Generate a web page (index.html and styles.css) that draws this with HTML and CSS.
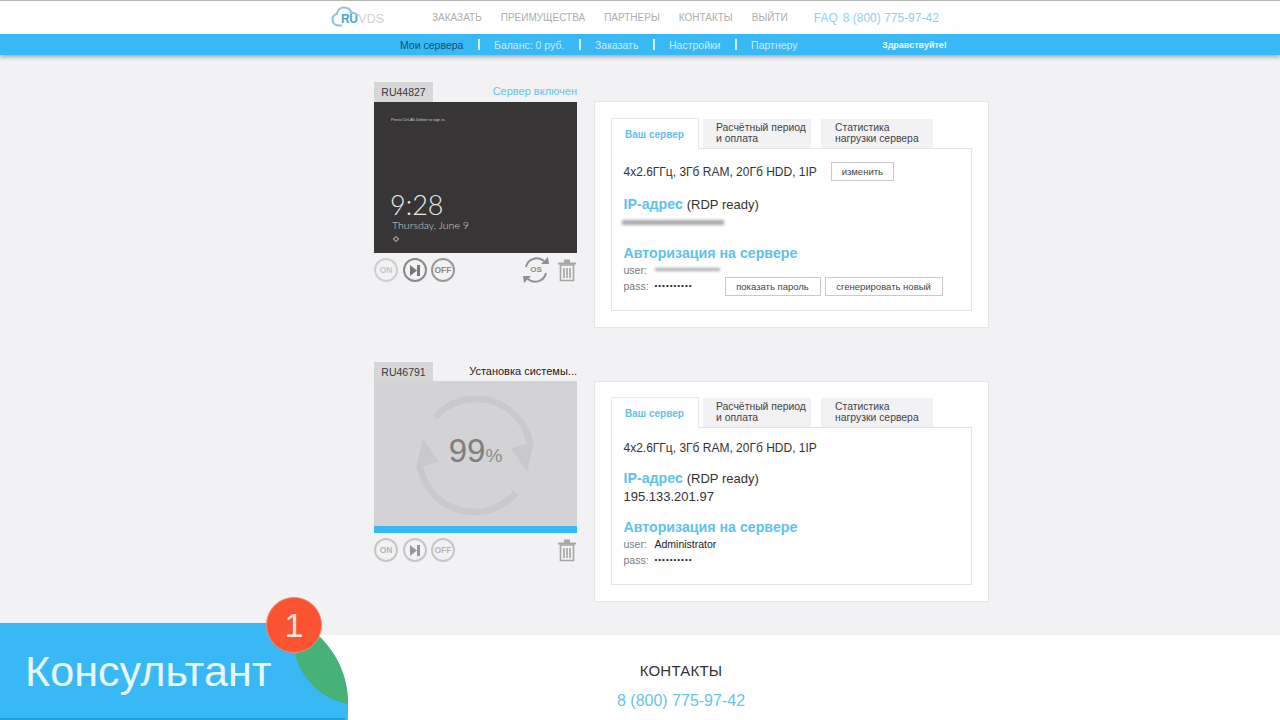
FILE: index.html
```html
<!DOCTYPE html>
<html lang="ru">
<head>
<meta charset="utf-8">
<title>RuVDS — Мои сервера</title>
<link rel="stylesheet" href="styles.css">
</head>
<body>
<header class="top">
  <a class="logo">
    <svg class="logo-cloud" width="28" height="22" viewBox="0 0 28 22"><path d="M11 19.500H7.500C3.500 19.500 1.500 16.500 1.500 13.500C1.500 10.500 3.500 8.500 6 8C6.500 4 9.500 1.500 13 1.500C16.500 1.500 19.500 3.500 20.500 7C23 6.800 26 8 26.500 10" fill="none" stroke="#8cc6da" stroke-width="2.200"/></svg>
    <span class="logo-ru">RU</span><span class="logo-vds">VDS</span>
  </a>
  <nav class="top-links">
    <a>ЗАКАЗАТЬ</a><a>ПРЕИМУЩЕСТВА</a><a>ПАРТНЕРЫ</a><a>КОНТАКТЫ</a><a>ВЫЙТИ</a>
  </nav>
  <div class="top-contact"><a>FAQ</a><a>8 (800) 775-97-42</a></div>
</header>
<div class="subnav">
  <a class="current">Мои сервера</a><i></i><a>Баланс: 0 руб.</a><i></i><a>Заказать</a><i></i><a>Настройки</a><i></i><a>Партнеру</a>
  <span class="hello">Здравствуйте!</span>
</div>
<main class="servers">
  <section class="server">
    <div class="left">
      <div class="left-head"><span class="tag">RU44827</span><span class="status status-on">Сервер включен</span></div>
      <div class="screen">
        <p class="press">Press Ctrl-Alt-Delete to sign in.</p>
        <p class="clock">9:28</p>
        <p class="date">Thursday, June 9</p>
        <svg class="lock" width="6" height="6" viewBox="0 0 6 6"><path d="M3 .5L5.500 3L3 5.500L.5 3Z" fill="none" stroke="#ddd"/></svg>
      </div>
      <div class="controls">
        <span class="round faint">ON</span>
        <span class="round strong"><svg width="12" height="11" viewBox="0 0 12 11"><path d="M1 0L8 5.500L1 11Z" fill="#777"/><rect x="8" width="3" height="11" fill="#777"/></svg></span>
        <span class="round mid">OFF</span>
        <span class="push"></span>
        <span class="os">
          <svg width="28" height="28" viewBox="0 0 28 28"><g fill="none" stroke="#8f8f8f" stroke-width="2"><path d="M4 11A11 11 0 0 1 22 5"/><path d="M24 17A11 11 0 0 1 6 23"/></g><path d="M19 8L27 8L26 1Z M9 20L1 20L2 27Z" fill="#8f8f8f"/></svg>
          <b>OS</b>
        </span>
        <svg class="trash" width="18" height="23" viewBox="0 0 18 23"><g fill="none" stroke="#a6a6a6" stroke-width="1.600"><path d="M2.500 6H15.500V21.500H2.500Z"/><path d="M6 9V19M9 9V19M12 9V19"/></g><path d="M0 3.500H18V5.500H0ZM6 .5H12V3.500H6Z" fill="#a6a6a6"/></svg>
      </div>
    </div>
    <div class="panel">
      <div class="tabs">
        <a class="tab active">Ваш сервер</a>
        <a class="tab">Расчётный период<br>и оплата</a>
        <a class="tab wide">Статистика<br>нагрузки сервера</a>
      </div>
      <div class="box box-one">
        <div class="spec"><span>4x2.6ГГц, 3Гб RAM, 20Гб HDD, 1IP</span><button class="btn change">изменить</button></div>
        <h3 class="heading ip-h">IP-адрес <span>(RDP ready)</span></h3>
        <div class="blur blur-ip"></div>
        <h3 class="heading auth-h">Авторизация на сервере</h3>
        <div class="cred cred-user"><label>user:</label><div class="blur blur-user"></div></div>
        <div class="cred cred-pass"><label>pass:</label><span class="dots">••••••••••</span><button class="btn show">показать пароль</button><button class="btn gen">сгенерировать новый</button></div>
      </div>
    </div>
  </section>

  <section class="server second">
    <div class="left">
      <div class="left-head"><span class="tag">RU46791</span><span class="status">Установка системы...</span></div>
      <div class="screen installing">
        <svg class="ring" width="114" height="114" viewBox="0 0 120 120"><g fill="none" stroke="#c9c8cc" stroke-width="7"><path d="M18 20A58 58 0 0 1 118 48"/><path d="M2 72A58 58 0 0 0 103 100"/></g><path d="M98 53L122 46L115 78Z M22 67L-2 74L5 42Z" fill="#c9c8cc"/></svg>
        <div class="percent">99<small>%</small></div>
        <div class="progress"></div>
      </div>
      <div class="controls">
        <span class="round faint2">ON</span>
        <span class="round faint2"><svg width="12" height="11" viewBox="0 0 12 11"><path d="M1 0L8 5.500L1 11Z" fill="#999"/><rect x="8" width="3" height="11" fill="#999"/></svg></span>
        <span class="round faint2">OFF</span>
        <span class="push"></span>
        <svg class="trash" width="18" height="23" viewBox="0 0 18 23"><g fill="none" stroke="#a6a6a6" stroke-width="1.600"><path d="M2.500 6H15.500V21.500H2.500Z"/><path d="M6 9V19M9 9V19M12 9V19"/></g><path d="M0 3.500H18V5.500H0ZM6 .5H12V3.500H6Z" fill="#a6a6a6"/></svg>
      </div>
    </div>
    <div class="panel">
      <div class="tabs">
        <a class="tab active">Ваш сервер</a>
        <a class="tab">Расчётный период<br>и оплата</a>
        <a class="tab wide">Статистика<br>нагрузки сервера</a>
      </div>
      <div class="box box-two">
        <div class="spec"><span>4x2.6ГГц, 3Гб RAM, 20Гб HDD, 1IP</span></div>
        <h3 class="heading ip-h2">IP-адрес <span>(RDP ready)</span></h3>
        <div class="ip-value">195.133.201.97</div>
        <h3 class="heading auth-h2">Авторизация на сервере</h3>
        <div class="cred cred-user"><label>user:</label><span class="val">Administrator</span></div>
        <div class="cred cred-last"><label>pass:</label><span class="dots">••••••••••</span></div>
      </div>
    </div>
  </section>
</main>
<footer class="footer">
  <div class="foot-title">КОНТАКТЫ</div>
  <div class="foot-phone">8 (800) 775-97-42</div>
</footer>
<aside class="consultant">
  <svg class="consultant-bg" width="348" height="97" viewBox="0 0 348 97"><path d="M0 0H290L320 14C338 32 348 55 348 81V97H0Z" fill="#38b9f5"/><path d="M320 14C338 32 348 55 348 81C322 76 303 58 295 32Z" fill="#48b178"/><rect y="95" width="345" height="2" fill="#1d9edd"/></svg>
  <span class="consultant-label">Консультант</span>
  <span class="badge">1</span>
</aside>
</body>
</html>
```
FILE: styles.css
```css
* { box-sizing: border-box; }
html, body { margin: 0; height: 720px; overflow: hidden; }
body { position: relative; background: #f2f1f4; font-family: "Liberation Sans", Arial, sans-serif; color: #333; }
p, h3 { margin: 0; }

.top { height: 34px; background: #fff; border-top: 1px solid #b5b5b5; display: flex; align-items: center; padding-left: 331px; }
.logo { width: 101px; height: 24px; display: flex; align-items: flex-end; position: relative; flex: none; padding-bottom: 3px; }
.logo-cloud { position: absolute; left: 0; top: 0; }
.logo-ru { margin-left: 10px; font-size: 12px; font-weight: bold; color: #46aacb; line-height: 15px; letter-spacing: -.5px; }
.logo-vds { font-size: 12.500px; color: #cfd1d3; line-height: 15px; margin-left: 1px; }
.top-links { display: flex; gap: 19px; font-size: 10px; color: #adadad; white-space: nowrap; }
.top-contact { display: flex; gap: 5px; margin-left: 26px; font-size: 12px; color: #8fd0ee; white-space: nowrap; }

.subnav { height: 21px; background: #38b9f5; box-shadow: 0 2px 4px rgba(90,110,125,.55); display: flex; align-items: center; padding-left: 400px; font-size: 10.500px; color: #c9ecfc; white-space: nowrap; position: relative; }
.subnav i { width: 2px; height: 11px; background: #d5f0fd; margin: 0 14.300px; }
.subnav .current { color: #0e4f74; }
.hello { position: absolute; left: 882px; font-size: 9px; font-weight: bold; color: #e6f6fe; }

.servers { width: 615px; margin-left: 374px; padding-top: 27px; }
.server { display: flex; gap: 17px; align-items: flex-start; }
.second { margin-top: 34px; }
.left { width: 203px; flex: none; }
.left-head { height: 20px; display: flex; justify-content: space-between; align-items: center; }
.second .left-head { height: 19px; }
.tag { width: 59px; height: 100%; background: #d7d6d9; font-size: 10.500px; display: flex; align-items: center; justify-content: center; color: #3a3a3a; }
.status { font-size: 11px; color: #222; padding-bottom: 2px; }
.status-on { color: #67c3e8; }

.screen { height: 151px; background: #373536; color: #e8e8e8; padding: 15px 0 0 17px; }
.press { font-size: 4px; line-height: 5px; color: #cfcfcf; }
.clock { font-family: Lato, "Liberation Sans", sans-serif; font-weight: 300; font-size: 27px; line-height: 28px; margin-top: 69px; margin-left: -1px; }
.date { font-family: Lato, "Liberation Sans", sans-serif; font-weight: 300; font-size: 10.600px; line-height: 12px; margin-left: 1px; color: #d5d5d5; }
.lock { display: block; margin: 5px 0 0 2px; }

.installing { height: 152px; background: #d3d2d5; padding: 0; position: relative; display: flex; align-items: center; justify-content: center; }
.ring { position: absolute; left: 44px; top: 17px; overflow: visible; }
.percent { position: relative; top: -4px; color: #7f7f7f; font-size: 33px; line-height: 40px; }
.percent small { font-size: 19px; color: #8c8c8c; }
.progress { position: absolute; left: 0; right: 0; bottom: 0; height: 7px; background: #38b9f5; }

.controls { display: flex; align-items: center; height: 24px; margin-top: 5px; }
.round { width: 24px; height: 24px; border-radius: 50%; border: 2px solid #999; margin-right: 4.500px; display: flex; align-items: center; justify-content: center; font-size: 8.500px; font-weight: bold; background: #f2f1f4; }
.faint { border-color: #cfcfd1; color: #c6c6c8; }
.strong { border-color: #8a8a8a; }
.mid { border-color: #9a9a9a; color: #8c8c8c; }
.faint2 { border-color: #c6c6c8; color: #b5b5b7; }
.push { flex: 1; }
.os { width: 28px; height: 28px; position: relative; margin-right: 8px; display: block; }
.os svg { display: block; }
.os b { position: absolute; left: 0; right: 0; top: 9px; text-align: center; font-size: 8px; line-height: 10px; color: #8a8a8a; }
.trash { display: block; margin-right: 1px; }

.panel { width: 395px; margin-top: 19px; background: #fff; border: 1px solid #e6e6e8; padding: 16px; height: 227px; }
.second .panel { height: 221px; padding-top: 15px; }
.tabs { display: flex; height: 31px; position: relative; z-index: 1; }
.tab { background: #f2f1f3; font-size: 10.400px; line-height: 11px; color: #444; width: 108px; margin: 1px 0 1px 4px; padding: 3px 0 0 13px; }
.tab.wide { width: 112px; margin-left: 10px; padding-left: 14px; }
.tab.active { width: 88px; margin: 0; background: #fff; border: 1px solid #e8e8ea; border-bottom: 0; height: 31px; font-size: 10px; font-weight: bold; color: #5fc2ea; padding: 10px 0 0 13px; }
.box { border: 1px solid #e4e4e6; margin-top: -1px; padding: 0 0 0 11.500px; width: 361px; position: relative; }
.box-one { height: 163px; padding-top: 13px; }
.box-two { height: 158px; padding-top: 13px; }
.spec { display: flex; align-items: center; height: 19px; font-size: 12px; color: #333; gap: 14px; }
.box-two .spec { height: 13px; }
.btn { font-family: inherit; font-size: 9.500px; color: #444; background: #fff; border: 1px solid #c9c9c9; padding: 0; height: 19px; display: block; flex: none; }
.change { width: 63px; }
.show { width: 96px; margin-left: 32px; }
.gen { width: 118px; margin-left: 4px; }
.heading { font-size: 14.200px; line-height: 16px; font-weight: bold; color: #5fc2ea; }
.heading span { font-size: 13px; font-weight: normal; color: #333; }
.ip-h { margin-top: 15px; }
.auth-h { margin-top: 20px; }
.ip-h2 { margin-top: 16px; }
.auth-h2 { margin-top: 15px; }
.ip-value { font-size: 13px; line-height: 15px; margin-top: 2px; color: #333; }
.blur { background: #a8a8a8; filter: blur(1.500px); height: 5px; }
.blur-ip { width: 102px; margin: 7px 0 0 -2px; }
.blur-user { width: 65px; height: 3px; margin-left: 6px; }
.cred { display: flex; align-items: center; height: 15px; font-size: 10.500px; color: #222; }
.cred label { width: 25px; color: #7a7a7a; }
.cred .val { margin-left: 6px; font-size: 10.500px; }
.dots { margin-left: 6px; width: 38px; font-size: 8px; letter-spacing: 1px; white-space: nowrap; color: #222; }
.cred-user { margin-top: 1px; }
.cred-last { margin-top: 1px; }
.box-one .cred-pass { height: 19px; }
.cred-pass label, .cred-pass .dots { margin-bottom: 2px; }

.footer { position: absolute; left: 0; right: 0; top: 635px; height: 85px; background: #fff; padding: 27px 0 0 82px; text-align: center; }
.foot-title { font-size: 15px; line-height: 18px; color: #333; letter-spacing: .2px; }
.foot-phone { font-size: 16px; line-height: 20px; margin-top: 11px; color: #67c3e8; }

.consultant { position: absolute; left: 0; top: 623px; width: 348px; height: 97px; }
.consultant-bg { position: absolute; left: 0; top: 0; display: block; }
.consultant-label { position: absolute; left: 25px; top: 24px; font-size: 43.200px; line-height: 48px; color: #eaf8ff; }
.badge { position: absolute; left: 266px; top: -26px; width: 56px; height: 56px; border-radius: 50%; background: #fb5231; color: #fbe6df; border: 1px solid #ef8a74; font-size: 34px; display: flex; align-items: center; justify-content: center; }
```
